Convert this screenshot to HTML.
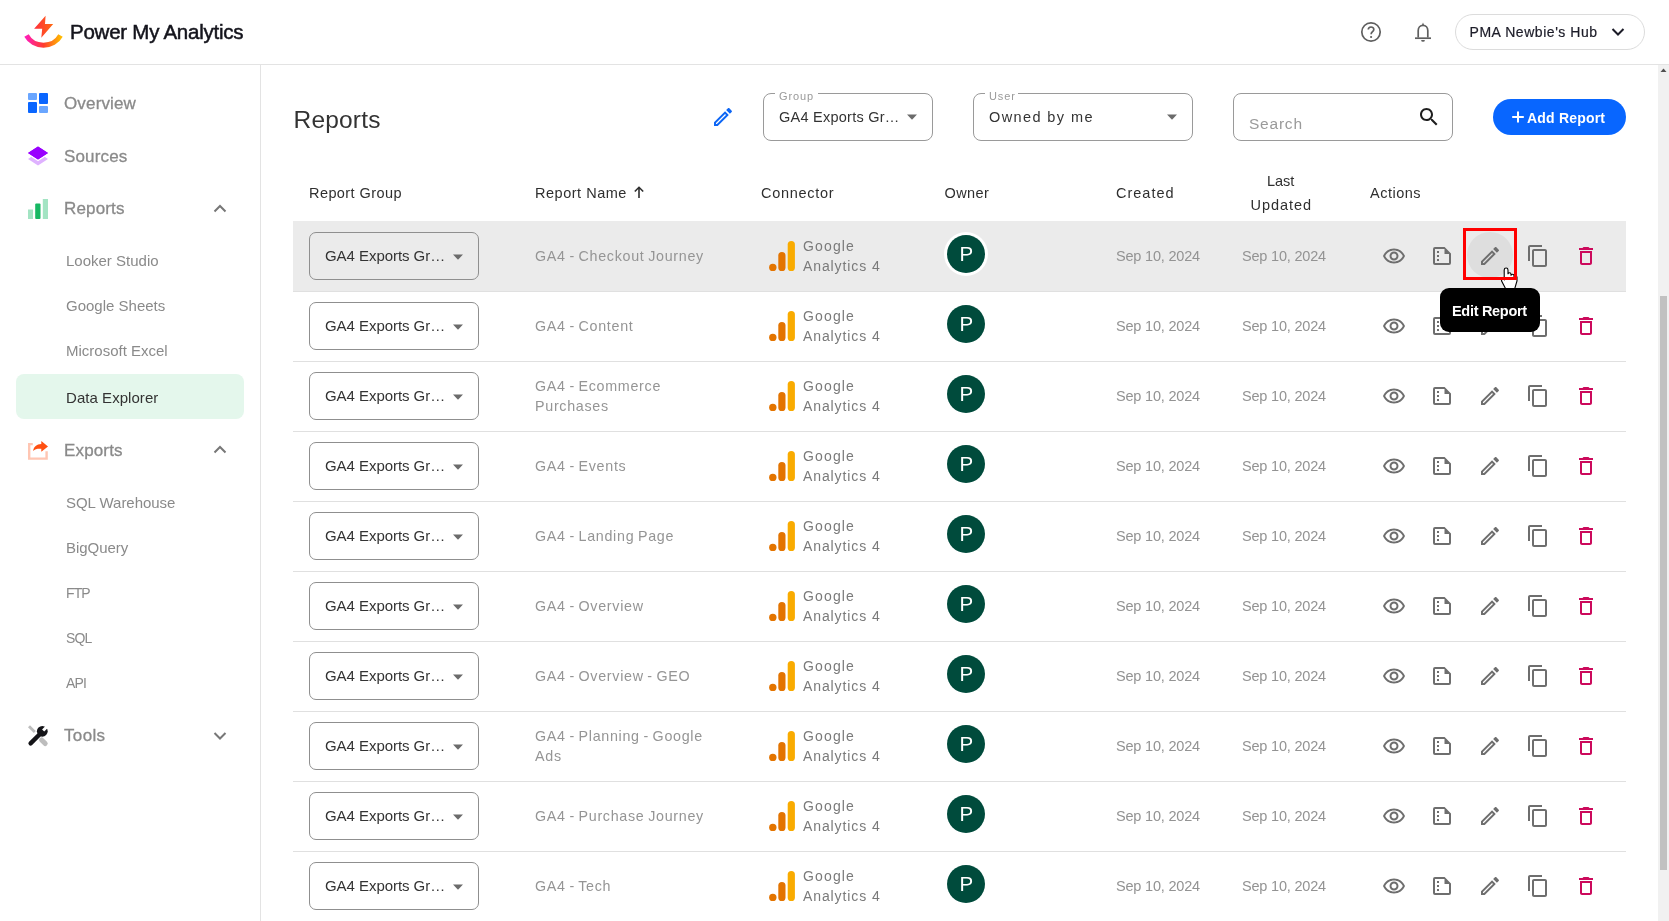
<!DOCTYPE html>
<html><head><meta charset="utf-8"><style>
html,body{margin:0;padding:0;}
body{width:1669px;height:921px;overflow:hidden;position:relative;background:#fff;font-family:"Liberation Sans", sans-serif;}
.t{position:absolute;white-space:nowrap;line-height:20px;}
svg{display:block;}
</style></head><body>
<div id="root" style="position:absolute;left:0;top:0;width:1669px;height:921px;overflow:hidden;background:#fff;will-change:transform">
<div style="position:absolute;left:0px;top:64px;width:1669px;height:1px;background:#e3e3e3"></div>
<svg style="position:absolute;left:20px;top:12px;" width="46" height="40" viewBox="0 0 46 40">
<defs>
<linearGradient id="lgA" x1="0" y1="0" x2="1" y2="0"><stop offset="0" stop-color="#ff1fb4"/><stop offset="0.5" stop-color="#ff3d2e"/><stop offset="1" stop-color="#ffb800"/></linearGradient>
<linearGradient id="lgB" x1="0" y1="0" x2="1" y2="0"><stop offset="0" stop-color="#ff2d3d"/><stop offset="1" stop-color="#ff6a10"/></linearGradient>
</defs>
<path d="M6.5 23.5 A19 17.5 0 0 0 40.5 23.5" fill="none" stroke="url(#lgA)" stroke-width="5"/>
<path d="M25.6 3.8 L14.1 16.7 L22.2 16.7 L21.3 25.7 L33.2 12 L25 12 Z" fill="url(#lgB)"/>
</svg>
<div class="t" style="left:70.00px;top:22.19px;font-size:20.5px;color:#14141c;font-weight:400;letter-spacing:-0.25px;-webkit-text-stroke:0.5px #14141c;">Power My Analytics</div>
<svg style="position:absolute;left:1359px;top:20px;" width="24" height="24" viewBox="0 0 24 24"><circle cx="12" cy="12" r="9.2" fill="none" stroke="#5f5f5f" stroke-width="1.7"/><path d="M9.3 9.6 C9.3 6.2 14.8 6.2 14.8 9.4 C14.8 11.6 12.1 11.7 12.1 14.3" fill="none" stroke="#5f5f5f" stroke-width="1.7"/><circle cx="12.1" cy="17" r="1.1" fill="#5f5f5f"/></svg>
<svg style="position:absolute;left:1411px;top:20px;" width="24" height="24" viewBox="0 0 24 24"><path d="M7.2 17.5 V10.5 C7.2 7.5 9.2 5.3 12 5.3 C14.8 5.3 16.8 7.5 16.8 10.5 V17.5" fill="none" stroke="#5f5f5f" stroke-width="1.7"/><path d="M4 18.2 H20" stroke="#5f5f5f" stroke-width="1.7"/><path d="M12 2.5 L13 5 L11 5z" fill="#5f5f5f"/><path d="M10.1 19.9 H13.9 A1.9 1.9 0 0 1 10.1 19.9z" fill="#5f5f5f"/></svg>
<div style="position:absolute;left:1455px;top:14px;width:190px;height:36px;border:1px solid #dcdcdc;border-radius:18px;box-sizing:border-box"></div>
<div class="t" style="left:1469.50px;top:21.95px;font-size:14px;color:#1c1c28;font-weight:400;letter-spacing:0.55px;-webkit-text-stroke:0.2px #1c1c28;">PMA Newbie's Hub</div>
<svg style="position:absolute;left:1610px;top:26px;" width="16" height="12" viewBox="0 0 16 12"><path d="M2.5 3 L8 8.5 L13.5 3" fill="none" stroke="#1c1c28" stroke-width="2"/></svg>
<div style="position:absolute;left:260px;top:65px;width:1px;height:856px;background:#e3e3e3"></div>
<svg style="position:absolute;left:28px;top:93px;" width="20" height="20" viewBox="0 0 20 20"><rect x="0" y="0" width="9" height="7" rx="1" fill="#6aa6ff"/><rect x="11" y="0" width="9" height="11" rx="1" fill="#0a66ff"/><rect x="0" y="9" width="9" height="11" rx="1" fill="#0a66ff"/><rect x="11" y="13" width="9" height="7" rx="1" fill="#6aa6ff"/></svg>
<div class="t" style="left:64.00px;top:93.61px;font-size:17px;color:#8a8a8a;font-weight:400;letter-spacing:0.15px;-webkit-text-stroke:0.3px #8a8a8a;">Overview</div>
<svg style="position:absolute;left:28px;top:145px;" width="20" height="22" viewBox="0 0 20 22"><path d="M10 7.4 L20 13.9 L10 20.4 L0 13.9z" fill="#dfb2ff"/><path d="M10 1.6 L20 8.1 L10 14.6 L0 8.1z" fill="#9900ff" stroke="#fff" stroke-width="2.6" paint-order="stroke"/><path d="M10 1.6 L20 8.1 L10 14.6 L0 8.1z" fill="#9900ff"/></svg>
<div class="t" style="left:64.00px;top:146.61px;font-size:17px;color:#8a8a8a;font-weight:400;letter-spacing:0.15px;-webkit-text-stroke:0.3px #8a8a8a;">Sources</div>
<svg style="position:absolute;left:28px;top:199px;" width="20" height="20" viewBox="0 0 20 20"><rect x="0" y="10.5" width="5" height="9.5" fill="#a3e4c3"/><rect x="7.2" y="4.5" width="5.3" height="15.5" rx="1" fill="#17b863"/><rect x="14.8" y="0" width="5.2" height="20" fill="#a3e4c3"/></svg>
<div class="t" style="left:64.00px;top:199.41px;font-size:17px;color:#8a8a8a;font-weight:400;letter-spacing:0.15px;-webkit-text-stroke:0.3px #8a8a8a;">Reports</div>
<svg style="position:absolute;left:212px;top:202px;" width="16" height="12" viewBox="0 0 16 12"><path d="M2.5 9.5 L8 4 L13.5 9.5" fill="none" stroke="#777" stroke-width="2"/></svg>
<div class="t" style="left:66.00px;top:251.10px;font-size:15px;color:#8a8a8a;font-weight:400;letter-spacing:0px;">Looker Studio</div>
<div class="t" style="left:66.00px;top:296.10px;font-size:15px;color:#8a8a8a;font-weight:400;letter-spacing:0px;">Google Sheets</div>
<div class="t" style="left:66.00px;top:341.10px;font-size:15px;color:#8a8a8a;font-weight:400;letter-spacing:0px;">Microsoft Excel</div>
<div style="position:absolute;left:16px;top:374px;width:228px;height:45px;background:#e4f7ec;border-radius:8px"></div>
<div class="t" style="left:66.00px;top:387.90px;font-size:15px;color:#333;font-weight:400;letter-spacing:0.05px;">Data Explorer</div>
<svg style="position:absolute;left:24px;top:436px;" width="28" height="28" viewBox="0 0 28 28"><path d="M8.8 8.1 H5.2 V22.6 H22.6 V15.2" fill="none" stroke="#ffc6b3" stroke-width="2.4"/><path d="M24 10.5 L17.3 5 V8.1 C12.5 8.3 9.8 11 9.1 14.9 C11 13 13.5 12.6 17.3 12.8 V15.8 Z" fill="#ff5012"/></svg>
<div class="t" style="left:64.00px;top:440.61px;font-size:17px;color:#8a8a8a;font-weight:400;letter-spacing:0.15px;-webkit-text-stroke:0.3px #8a8a8a;">Exports</div>
<svg style="position:absolute;left:212px;top:443px;" width="16" height="12" viewBox="0 0 16 12"><path d="M2.5 9.5 L8 4 L13.5 9.5" fill="none" stroke="#777" stroke-width="2"/></svg>
<div class="t" style="left:66.00px;top:492.60px;font-size:15px;color:#8a8a8a;font-weight:400;letter-spacing:-0.03px;">SQL Warehouse</div>
<div class="t" style="left:66.00px;top:537.60px;font-size:15px;color:#8a8a8a;font-weight:400;letter-spacing:-0.03px;">BigQuery</div>
<div class="t" style="left:66.00px;top:582.55px;font-size:14px;color:#8a8a8a;font-weight:400;letter-spacing:-0.9px;">FTP</div>
<div class="t" style="left:66.00px;top:627.55px;font-size:14px;color:#8a8a8a;font-weight:400;letter-spacing:-0.9px;">SQL</div>
<div class="t" style="left:66.00px;top:672.55px;font-size:14px;color:#8a8a8a;font-weight:400;letter-spacing:-0.9px;">API</div>
<svg style="position:absolute;left:24px;top:721px;" width="28" height="28" viewBox="0 0 28 28"><defs><mask id="wm" maskUnits="userSpaceOnUse" x="0" y="0" width="28" height="28"><rect x="0" y="0" width="28" height="28" fill="#fff"/><path d="M20.21 10.51 L18.09 8.39 L22.19 4.29 L24.31 6.41z" fill="#000"/></mask></defs><path d="M5.0 5.2 L10.8 11" stroke="#bdbdbd" stroke-width="2.8"/><path d="M17.6 19 L21.2 22.6" stroke="#bdbdbd" stroke-width="5" stroke-linecap="round"/><g mask="url(#wm)" fill="#141418"><circle cx="18.3" cy="10.3" r="5.4"/><path d="M6.6 22.4 L15.5 13.5" stroke="#141418" stroke-width="4.4" stroke-linecap="round"/></g></svg>
<div class="t" style="left:64.00px;top:726.41px;font-size:17px;color:#8a8a8a;font-weight:400;letter-spacing:0.35px;-webkit-text-stroke:0.3px #8a8a8a;">Tools</div>
<svg style="position:absolute;left:212px;top:730px;" width="16" height="12" viewBox="0 0 16 12"><path d="M2.5 3 L8 8.5 L13.5 3" fill="none" stroke="#777" stroke-width="2"/></svg>
<div class="t" style="left:293.50px;top:110.21px;font-size:24.5px;color:#333;font-weight:400;letter-spacing:0.2px;">Reports</div>
<svg style="position:absolute;left:711px;top:105px;" width="24" height="24" viewBox="0 0 24 24"><path d="M3 17.25V21h3.75L17.81 9.94l-3.75-3.75L3 17.25zM5.92 19H5v-.92l9.06-9.06.92.92L5.92 19zM20.71 5.63l-2.34-2.34c-.39-.39-1.02-.39-1.41 0l-1.83 1.83 3.75 3.75 1.83-1.83c.39-.39.39-1.02 0-1.41z" fill="#0d66f5"/></svg>
<div style="position:absolute;left:763px;top:93px;width:170px;height:48px;border:1px solid #9a9a9a;border-radius:8px;box-sizing:border-box"></div>
<div style="position:absolute;left:775px;top:91px;width:43px;height:5px;background:#fff"></div>
<div class="t" style="left:779.00px;top:86.19px;font-size:11px;color:#9a9a9a;font-weight:400;letter-spacing:0.9px;">Group</div>
<div class="t" style="left:779.00px;top:106.67px;font-size:14.5px;color:#333;font-weight:400;letter-spacing:0.25px;">GA4 Exports Gr…</div>
<svg style="position:absolute;left:904px;top:112px;" width="16" height="10" viewBox="0 0 16 10"><path d="M3 2.5 H13 L8 7.8z" fill="#6b6b6b"/></svg>
<div style="position:absolute;left:973px;top:93px;width:220px;height:48px;border:1px solid #9a9a9a;border-radius:8px;box-sizing:border-box"></div>
<div style="position:absolute;left:985px;top:91px;width:33px;height:5px;background:#fff"></div>
<div class="t" style="left:989.00px;top:86.19px;font-size:11px;color:#9a9a9a;font-weight:400;letter-spacing:0.9px;">User</div>
<div class="t" style="left:989.00px;top:107.37px;font-size:14.5px;color:#333;font-weight:400;letter-spacing:1.4px;">Owned by me</div>
<svg style="position:absolute;left:1164px;top:112px;" width="16" height="10" viewBox="0 0 16 10"><path d="M3 2.5 H13 L8 7.8z" fill="#6b6b6b"/></svg>
<div style="position:absolute;left:1233px;top:93px;width:220px;height:48px;border:1px solid #9a9a9a;border-radius:8px;box-sizing:border-box"></div>
<div class="t" style="left:1249.00px;top:113.53px;font-size:15.5px;color:#9a9a9a;font-weight:400;letter-spacing:0.78px;">Search</div>
<svg style="position:absolute;left:1417px;top:105px;" width="24" height="24" viewBox="0 0 24 24"><path d="M15.5 14h-.79l-.28-.27C15.41 12.59 16 11.11 16 9.5 16 5.91 13.09 3 9.5 3S3 5.91 3 9.5 5.91 16 9.5 16c1.61 0 3.09-.59 4.23-1.57l.27.28v.79l5 4.99L20.49 19l-4.99-5zm-6 0C7.01 14 5 11.99 5 9.5S7.01 5 9.5 5 14 7.01 14 9.5 11.99 14 9.5 14z" fill="#1f1f1f"/></svg>
<div style="position:absolute;left:1493px;top:99px;width:133px;height:36px;background:#0866ff;border-radius:18px"></div>
<svg style="position:absolute;left:1511px;top:111px;" width="14" height="12" viewBox="0 0 14 12"><path d="M7 0.5 V11.5 M1.2 6 H12.8" stroke="#fff" stroke-width="2"/></svg>
<div class="t" style="left:1527.00px;top:107.75px;font-size:14px;color:#fff;font-weight:700;letter-spacing:0.2px;">Add Report</div>
<div class="t" style="left:309.00px;top:183.27px;font-size:14.5px;color:#2f2f2f;font-weight:400;letter-spacing:0.42px;">Report Group</div>
<div class="t" style="left:535.00px;top:183.27px;font-size:14.5px;color:#2f2f2f;font-weight:400;letter-spacing:0.52px;">Report Name</div>
<svg style="position:absolute;left:632px;top:184px;" width="14" height="16" viewBox="0 0 14 16"><path d="M7 14 V3.5 M2.8 7.5 L7 3.3 L11.2 7.5" fill="none" stroke="#2f2f2f" stroke-width="1.6"/></svg>
<div class="t" style="left:761.00px;top:183.37px;font-size:14.5px;color:#2f2f2f;font-weight:400;letter-spacing:0.72px;">Connector</div>
<div class="t" style="left:944.50px;top:183.37px;font-size:14.5px;color:#2f2f2f;font-weight:400;letter-spacing:0.42px;">Owner</div>
<div class="t" style="left:1116.00px;top:183.37px;font-size:14.5px;color:#2f2f2f;font-weight:400;letter-spacing:1.0px;">Created</div>
<div class="t" style="left:1267.00px;top:171.27px;font-size:14.5px;color:#2f2f2f;font-weight:400;letter-spacing:-0.05px;">Last</div>
<div class="t" style="left:1250.50px;top:195.07px;font-size:14.5px;color:#2f2f2f;font-weight:400;letter-spacing:0.95px;">Updated</div>
<div class="t" style="left:1370.00px;top:183.37px;font-size:14.5px;color:#2f2f2f;font-weight:400;letter-spacing:0.5px;">Actions</div>
<div style="position:absolute;left:293px;top:221px;width:1333px;height:70px;background:#ebebeb"></div>
<div style="position:absolute;left:293px;top:291px;width:1333px;height:1px;background:#e0e0e0"></div>
<div style="position:absolute;left:309px;top:232px;width:170px;height:48px;border:1px solid #8f8f8f;border-radius:7px;box-sizing:border-box"></div>
<div class="t" style="left:325.00px;top:245.80px;font-size:15px;color:#333;font-weight:400;letter-spacing:-0.05px;">GA4 Exports Gr…</div>
<svg style="position:absolute;left:450px;top:252px;" width="16" height="10" viewBox="0 0 16 10"><path d="M3 2.5 H13 L8 7.8z" fill="#6b6b6b"/></svg>
<div class="t" style="left:535.00px;top:246.14px;font-size:14.3px;color:#959595;font-weight:400;letter-spacing:0.7px;word-spacing:-1px;">GA4 - Checkout Journey</div>
<svg style="position:absolute;left:769px;top:241px;" width="27" height="31" viewBox="0 0 27 31"><circle cx="3.8" cy="26.4" r="3.7" fill="#e37400"/><rect x="9.3" y="11" width="7.2" height="19" rx="3.6" fill="#e37400"/><rect x="18.7" y="0" width="7.2" height="30" rx="3.6" fill="#f9ab00"/></svg>
<div class="t" style="left:803.00px;top:236.35px;font-size:14px;color:#7a7a7a;font-weight:400;letter-spacing:1.15px;">Google</div>
<div class="t" style="left:803.00px;top:256.35px;font-size:14px;color:#7a7a7a;font-weight:400;letter-spacing:0.9px;">Analytics 4</div>
<div style="position:absolute;left:944px;top:232px;width:44px;height:44px;border-radius:50%;background:#fff"></div>
<div style="position:absolute;left:947px;top:235px;width:38px;height:38px;border-radius:50%;background:#004b3c"></div>
<div class="t" style="left:959.50px;top:244.39px;font-size:20.5px;color:#fff;font-weight:400;letter-spacing:0px;">P</div>
<div class="t" style="left:1116.00px;top:246.17px;font-size:14.5px;color:#939393;font-weight:400;letter-spacing:-0.2px;">Sep 10, 2024</div>
<div class="t" style="left:1242.00px;top:246.17px;font-size:14.5px;color:#939393;font-weight:400;letter-spacing:-0.2px;">Sep 10, 2024</div>
<svg style="position:absolute;left:1382px;top:243.5px;" width="24" height="24" viewBox="0 0 24 24"><path d="M12 6.5c3.79 0 7.17 2.13 8.82 5.5-1.65 3.37-5.02 5.5-8.82 5.5S4.83 15.37 3.18 12C4.83 8.63 8.21 6.5 12 6.5m0-2C7 4.5 2.73 7.61 1 12c1.73 4.39 6 7.5 11 7.5s9.27-3.11 11-7.5c-1.73-4.39-6-7.5-11-7.5zm0 5c1.38 0 2.5 1.12 2.5 2.5s-1.12 2.5-2.5 2.5-2.5-1.12-2.5-2.5 1.12-2.5 2.5-2.5m0-2c-2.48 0-4.5 2.02-4.5 4.5s2.02 4.5 4.5 4.5 4.5-2.02 4.5-4.5-2.02-4.5-4.5-4.5z" fill="#6e6e6e"/></svg>
<svg style="position:absolute;left:1430px;top:244px;" width="24" height="24" viewBox="0 0 24 24"><path fill-rule="evenodd" d="M5 3H14.6L21 9.4V19a2 2 0 0 1-2 2H5a2 2 0 0 1-2-2V5a2 2 0 0 1 2-2zM5 5V19H19V10H14.5V5z" fill="#6e6e6e"/><path d="M7 7h2v2H7zM7 11h2v2H7zM7 15h2v2H7z" fill="#6e6e6e"/></svg>
<div style="position:absolute;left:1467px;top:232px;width:46px;height:46px;border-radius:50%;background:#dedede"></div>
<svg style="position:absolute;left:1478px;top:244px;" width="24" height="24" viewBox="0 0 24 24"><path d="M3 17.25V21h3.75L17.81 9.94l-3.75-3.75L3 17.25zM5.92 19H5v-.92l9.06-9.06.92.92L5.92 19zM20.71 5.63l-2.34-2.34c-.39-.39-1.02-.39-1.41 0l-1.83 1.83 3.75 3.75 1.83-1.83c.39-.39.39-1.02 0-1.41z" fill="#6e6e6e"/></svg>
<svg style="position:absolute;left:1526px;top:244px;" width="24" height="24" viewBox="0 0 24 24"><path d="M16 1H4c-1.1 0-2 .9-2 2v14h2V3h12V1zm3 4H8c-1.1 0-2 .9-2 2v14c0 1.1.9 2 2 2h11c1.1 0 2-.9 2-2V7c0-1.1-.9-2-2-2zm0 16H8V7h11v14z" fill="#6e6e6e"/></svg>
<svg style="position:absolute;left:1574px;top:244px;" width="24" height="24" viewBox="0 0 24 24"><path d="M16 9v10H8V9h8m-1.5-6h-5l-1 1H5v2h14V4h-3.5l-1-1zM18 7H6v12c0 1.1.9 2 2 2h8c1.1 0 2-.9 2-2V7z" fill="#cc0a5c"/></svg>
<div style="position:absolute;left:293px;top:361px;width:1333px;height:1px;background:#e0e0e0"></div>
<div style="position:absolute;left:309px;top:302px;width:170px;height:48px;border:1px solid #8f8f8f;border-radius:7px;box-sizing:border-box"></div>
<div class="t" style="left:325.00px;top:315.80px;font-size:15px;color:#333;font-weight:400;letter-spacing:-0.05px;">GA4 Exports Gr…</div>
<svg style="position:absolute;left:450px;top:322px;" width="16" height="10" viewBox="0 0 16 10"><path d="M3 2.5 H13 L8 7.8z" fill="#6b6b6b"/></svg>
<div class="t" style="left:535.00px;top:316.14px;font-size:14.3px;color:#959595;font-weight:400;letter-spacing:0.7px;word-spacing:-1px;">GA4 - Content</div>
<svg style="position:absolute;left:769px;top:311px;" width="27" height="31" viewBox="0 0 27 31"><circle cx="3.8" cy="26.4" r="3.7" fill="#e37400"/><rect x="9.3" y="11" width="7.2" height="19" rx="3.6" fill="#e37400"/><rect x="18.7" y="0" width="7.2" height="30" rx="3.6" fill="#f9ab00"/></svg>
<div class="t" style="left:803.00px;top:306.35px;font-size:14px;color:#7a7a7a;font-weight:400;letter-spacing:1.15px;">Google</div>
<div class="t" style="left:803.00px;top:326.35px;font-size:14px;color:#7a7a7a;font-weight:400;letter-spacing:0.9px;">Analytics 4</div>
<div style="position:absolute;left:944px;top:302px;width:44px;height:44px;border-radius:50%;background:#fff"></div>
<div style="position:absolute;left:947px;top:305px;width:38px;height:38px;border-radius:50%;background:#004b3c"></div>
<div class="t" style="left:959.50px;top:314.39px;font-size:20.5px;color:#fff;font-weight:400;letter-spacing:0px;">P</div>
<div class="t" style="left:1116.00px;top:316.17px;font-size:14.5px;color:#939393;font-weight:400;letter-spacing:-0.2px;">Sep 10, 2024</div>
<div class="t" style="left:1242.00px;top:316.17px;font-size:14.5px;color:#939393;font-weight:400;letter-spacing:-0.2px;">Sep 10, 2024</div>
<svg style="position:absolute;left:1382px;top:313.5px;" width="24" height="24" viewBox="0 0 24 24"><path d="M12 6.5c3.79 0 7.17 2.13 8.82 5.5-1.65 3.37-5.02 5.5-8.82 5.5S4.83 15.37 3.18 12C4.83 8.63 8.21 6.5 12 6.5m0-2C7 4.5 2.73 7.61 1 12c1.73 4.39 6 7.5 11 7.5s9.27-3.11 11-7.5c-1.73-4.39-6-7.5-11-7.5zm0 5c1.38 0 2.5 1.12 2.5 2.5s-1.12 2.5-2.5 2.5-2.5-1.12-2.5-2.5 1.12-2.5 2.5-2.5m0-2c-2.48 0-4.5 2.02-4.5 4.5s2.02 4.5 4.5 4.5 4.5-2.02 4.5-4.5-2.02-4.5-4.5-4.5z" fill="#6e6e6e"/></svg>
<svg style="position:absolute;left:1430px;top:314px;" width="24" height="24" viewBox="0 0 24 24"><path fill-rule="evenodd" d="M5 3H14.6L21 9.4V19a2 2 0 0 1-2 2H5a2 2 0 0 1-2-2V5a2 2 0 0 1 2-2zM5 5V19H19V10H14.5V5z" fill="#6e6e6e"/><path d="M7 7h2v2H7zM7 11h2v2H7zM7 15h2v2H7z" fill="#6e6e6e"/></svg>
<svg style="position:absolute;left:1478px;top:314px;" width="24" height="24" viewBox="0 0 24 24"><path d="M3 17.25V21h3.75L17.81 9.94l-3.75-3.75L3 17.25zM5.92 19H5v-.92l9.06-9.06.92.92L5.92 19zM20.71 5.63l-2.34-2.34c-.39-.39-1.02-.39-1.41 0l-1.83 1.83 3.75 3.75 1.83-1.83c.39-.39.39-1.02 0-1.41z" fill="#6e6e6e"/></svg>
<svg style="position:absolute;left:1526px;top:314px;" width="24" height="24" viewBox="0 0 24 24"><path d="M16 1H4c-1.1 0-2 .9-2 2v14h2V3h12V1zm3 4H8c-1.1 0-2 .9-2 2v14c0 1.1.9 2 2 2h11c1.1 0 2-.9 2-2V7c0-1.1-.9-2-2-2zm0 16H8V7h11v14z" fill="#6e6e6e"/></svg>
<svg style="position:absolute;left:1574px;top:314px;" width="24" height="24" viewBox="0 0 24 24"><path d="M16 9v10H8V9h8m-1.5-6h-5l-1 1H5v2h14V4h-3.5l-1-1zM18 7H6v12c0 1.1.9 2 2 2h8c1.1 0 2-.9 2-2V7z" fill="#cc0a5c"/></svg>
<div style="position:absolute;left:293px;top:431px;width:1333px;height:1px;background:#e0e0e0"></div>
<div style="position:absolute;left:309px;top:372px;width:170px;height:48px;border:1px solid #8f8f8f;border-radius:7px;box-sizing:border-box"></div>
<div class="t" style="left:325.00px;top:385.80px;font-size:15px;color:#333;font-weight:400;letter-spacing:-0.05px;">GA4 Exports Gr…</div>
<svg style="position:absolute;left:450px;top:392px;" width="16" height="10" viewBox="0 0 16 10"><path d="M3 2.5 H13 L8 7.8z" fill="#6b6b6b"/></svg>
<div class="t" style="left:535.00px;top:376.14px;font-size:14.3px;color:#959595;font-weight:400;letter-spacing:0.7px;word-spacing:-1px;">GA4 - Ecommerce</div>
<div class="t" style="left:535.00px;top:396.14px;font-size:14.3px;color:#959595;font-weight:400;letter-spacing:0.7px;word-spacing:-1px;">Purchases</div>
<svg style="position:absolute;left:769px;top:381px;" width="27" height="31" viewBox="0 0 27 31"><circle cx="3.8" cy="26.4" r="3.7" fill="#e37400"/><rect x="9.3" y="11" width="7.2" height="19" rx="3.6" fill="#e37400"/><rect x="18.7" y="0" width="7.2" height="30" rx="3.6" fill="#f9ab00"/></svg>
<div class="t" style="left:803.00px;top:376.35px;font-size:14px;color:#7a7a7a;font-weight:400;letter-spacing:1.15px;">Google</div>
<div class="t" style="left:803.00px;top:396.35px;font-size:14px;color:#7a7a7a;font-weight:400;letter-spacing:0.9px;">Analytics 4</div>
<div style="position:absolute;left:944px;top:372px;width:44px;height:44px;border-radius:50%;background:#fff"></div>
<div style="position:absolute;left:947px;top:375px;width:38px;height:38px;border-radius:50%;background:#004b3c"></div>
<div class="t" style="left:959.50px;top:384.39px;font-size:20.5px;color:#fff;font-weight:400;letter-spacing:0px;">P</div>
<div class="t" style="left:1116.00px;top:386.17px;font-size:14.5px;color:#939393;font-weight:400;letter-spacing:-0.2px;">Sep 10, 2024</div>
<div class="t" style="left:1242.00px;top:386.17px;font-size:14.5px;color:#939393;font-weight:400;letter-spacing:-0.2px;">Sep 10, 2024</div>
<svg style="position:absolute;left:1382px;top:383.5px;" width="24" height="24" viewBox="0 0 24 24"><path d="M12 6.5c3.79 0 7.17 2.13 8.82 5.5-1.65 3.37-5.02 5.5-8.82 5.5S4.83 15.37 3.18 12C4.83 8.63 8.21 6.5 12 6.5m0-2C7 4.5 2.73 7.61 1 12c1.73 4.39 6 7.5 11 7.5s9.27-3.11 11-7.5c-1.73-4.39-6-7.5-11-7.5zm0 5c1.38 0 2.5 1.12 2.5 2.5s-1.12 2.5-2.5 2.5-2.5-1.12-2.5-2.5 1.12-2.5 2.5-2.5m0-2c-2.48 0-4.5 2.02-4.5 4.5s2.02 4.5 4.5 4.5 4.5-2.02 4.5-4.5-2.02-4.5-4.5-4.5z" fill="#6e6e6e"/></svg>
<svg style="position:absolute;left:1430px;top:384px;" width="24" height="24" viewBox="0 0 24 24"><path fill-rule="evenodd" d="M5 3H14.6L21 9.4V19a2 2 0 0 1-2 2H5a2 2 0 0 1-2-2V5a2 2 0 0 1 2-2zM5 5V19H19V10H14.5V5z" fill="#6e6e6e"/><path d="M7 7h2v2H7zM7 11h2v2H7zM7 15h2v2H7z" fill="#6e6e6e"/></svg>
<svg style="position:absolute;left:1478px;top:384px;" width="24" height="24" viewBox="0 0 24 24"><path d="M3 17.25V21h3.75L17.81 9.94l-3.75-3.75L3 17.25zM5.92 19H5v-.92l9.06-9.06.92.92L5.92 19zM20.71 5.63l-2.34-2.34c-.39-.39-1.02-.39-1.41 0l-1.83 1.83 3.75 3.75 1.83-1.83c.39-.39.39-1.02 0-1.41z" fill="#6e6e6e"/></svg>
<svg style="position:absolute;left:1526px;top:384px;" width="24" height="24" viewBox="0 0 24 24"><path d="M16 1H4c-1.1 0-2 .9-2 2v14h2V3h12V1zm3 4H8c-1.1 0-2 .9-2 2v14c0 1.1.9 2 2 2h11c1.1 0 2-.9 2-2V7c0-1.1-.9-2-2-2zm0 16H8V7h11v14z" fill="#6e6e6e"/></svg>
<svg style="position:absolute;left:1574px;top:384px;" width="24" height="24" viewBox="0 0 24 24"><path d="M16 9v10H8V9h8m-1.5-6h-5l-1 1H5v2h14V4h-3.5l-1-1zM18 7H6v12c0 1.1.9 2 2 2h8c1.1 0 2-.9 2-2V7z" fill="#cc0a5c"/></svg>
<div style="position:absolute;left:293px;top:501px;width:1333px;height:1px;background:#e0e0e0"></div>
<div style="position:absolute;left:309px;top:442px;width:170px;height:48px;border:1px solid #8f8f8f;border-radius:7px;box-sizing:border-box"></div>
<div class="t" style="left:325.00px;top:455.80px;font-size:15px;color:#333;font-weight:400;letter-spacing:-0.05px;">GA4 Exports Gr…</div>
<svg style="position:absolute;left:450px;top:462px;" width="16" height="10" viewBox="0 0 16 10"><path d="M3 2.5 H13 L8 7.8z" fill="#6b6b6b"/></svg>
<div class="t" style="left:535.00px;top:456.14px;font-size:14.3px;color:#959595;font-weight:400;letter-spacing:0.7px;word-spacing:-1px;">GA4 - Events</div>
<svg style="position:absolute;left:769px;top:451px;" width="27" height="31" viewBox="0 0 27 31"><circle cx="3.8" cy="26.4" r="3.7" fill="#e37400"/><rect x="9.3" y="11" width="7.2" height="19" rx="3.6" fill="#e37400"/><rect x="18.7" y="0" width="7.2" height="30" rx="3.6" fill="#f9ab00"/></svg>
<div class="t" style="left:803.00px;top:446.35px;font-size:14px;color:#7a7a7a;font-weight:400;letter-spacing:1.15px;">Google</div>
<div class="t" style="left:803.00px;top:466.35px;font-size:14px;color:#7a7a7a;font-weight:400;letter-spacing:0.9px;">Analytics 4</div>
<div style="position:absolute;left:944px;top:442px;width:44px;height:44px;border-radius:50%;background:#fff"></div>
<div style="position:absolute;left:947px;top:445px;width:38px;height:38px;border-radius:50%;background:#004b3c"></div>
<div class="t" style="left:959.50px;top:454.39px;font-size:20.5px;color:#fff;font-weight:400;letter-spacing:0px;">P</div>
<div class="t" style="left:1116.00px;top:456.17px;font-size:14.5px;color:#939393;font-weight:400;letter-spacing:-0.2px;">Sep 10, 2024</div>
<div class="t" style="left:1242.00px;top:456.17px;font-size:14.5px;color:#939393;font-weight:400;letter-spacing:-0.2px;">Sep 10, 2024</div>
<svg style="position:absolute;left:1382px;top:453.5px;" width="24" height="24" viewBox="0 0 24 24"><path d="M12 6.5c3.79 0 7.17 2.13 8.82 5.5-1.65 3.37-5.02 5.5-8.82 5.5S4.83 15.37 3.18 12C4.83 8.63 8.21 6.5 12 6.5m0-2C7 4.5 2.73 7.61 1 12c1.73 4.39 6 7.5 11 7.5s9.27-3.11 11-7.5c-1.73-4.39-6-7.5-11-7.5zm0 5c1.38 0 2.5 1.12 2.5 2.5s-1.12 2.5-2.5 2.5-2.5-1.12-2.5-2.5 1.12-2.5 2.5-2.5m0-2c-2.48 0-4.5 2.02-4.5 4.5s2.02 4.5 4.5 4.5 4.5-2.02 4.5-4.5-2.02-4.5-4.5-4.5z" fill="#6e6e6e"/></svg>
<svg style="position:absolute;left:1430px;top:454px;" width="24" height="24" viewBox="0 0 24 24"><path fill-rule="evenodd" d="M5 3H14.6L21 9.4V19a2 2 0 0 1-2 2H5a2 2 0 0 1-2-2V5a2 2 0 0 1 2-2zM5 5V19H19V10H14.5V5z" fill="#6e6e6e"/><path d="M7 7h2v2H7zM7 11h2v2H7zM7 15h2v2H7z" fill="#6e6e6e"/></svg>
<svg style="position:absolute;left:1478px;top:454px;" width="24" height="24" viewBox="0 0 24 24"><path d="M3 17.25V21h3.75L17.81 9.94l-3.75-3.75L3 17.25zM5.92 19H5v-.92l9.06-9.06.92.92L5.92 19zM20.71 5.63l-2.34-2.34c-.39-.39-1.02-.39-1.41 0l-1.83 1.83 3.75 3.75 1.83-1.83c.39-.39.39-1.02 0-1.41z" fill="#6e6e6e"/></svg>
<svg style="position:absolute;left:1526px;top:454px;" width="24" height="24" viewBox="0 0 24 24"><path d="M16 1H4c-1.1 0-2 .9-2 2v14h2V3h12V1zm3 4H8c-1.1 0-2 .9-2 2v14c0 1.1.9 2 2 2h11c1.1 0 2-.9 2-2V7c0-1.1-.9-2-2-2zm0 16H8V7h11v14z" fill="#6e6e6e"/></svg>
<svg style="position:absolute;left:1574px;top:454px;" width="24" height="24" viewBox="0 0 24 24"><path d="M16 9v10H8V9h8m-1.5-6h-5l-1 1H5v2h14V4h-3.5l-1-1zM18 7H6v12c0 1.1.9 2 2 2h8c1.1 0 2-.9 2-2V7z" fill="#cc0a5c"/></svg>
<div style="position:absolute;left:293px;top:571px;width:1333px;height:1px;background:#e0e0e0"></div>
<div style="position:absolute;left:309px;top:512px;width:170px;height:48px;border:1px solid #8f8f8f;border-radius:7px;box-sizing:border-box"></div>
<div class="t" style="left:325.00px;top:525.80px;font-size:15px;color:#333;font-weight:400;letter-spacing:-0.05px;">GA4 Exports Gr…</div>
<svg style="position:absolute;left:450px;top:532px;" width="16" height="10" viewBox="0 0 16 10"><path d="M3 2.5 H13 L8 7.8z" fill="#6b6b6b"/></svg>
<div class="t" style="left:535.00px;top:526.14px;font-size:14.3px;color:#959595;font-weight:400;letter-spacing:0.7px;word-spacing:-1px;">GA4 - Landing Page</div>
<svg style="position:absolute;left:769px;top:521px;" width="27" height="31" viewBox="0 0 27 31"><circle cx="3.8" cy="26.4" r="3.7" fill="#e37400"/><rect x="9.3" y="11" width="7.2" height="19" rx="3.6" fill="#e37400"/><rect x="18.7" y="0" width="7.2" height="30" rx="3.6" fill="#f9ab00"/></svg>
<div class="t" style="left:803.00px;top:516.35px;font-size:14px;color:#7a7a7a;font-weight:400;letter-spacing:1.15px;">Google</div>
<div class="t" style="left:803.00px;top:536.35px;font-size:14px;color:#7a7a7a;font-weight:400;letter-spacing:0.9px;">Analytics 4</div>
<div style="position:absolute;left:944px;top:512px;width:44px;height:44px;border-radius:50%;background:#fff"></div>
<div style="position:absolute;left:947px;top:515px;width:38px;height:38px;border-radius:50%;background:#004b3c"></div>
<div class="t" style="left:959.50px;top:524.39px;font-size:20.5px;color:#fff;font-weight:400;letter-spacing:0px;">P</div>
<div class="t" style="left:1116.00px;top:526.17px;font-size:14.5px;color:#939393;font-weight:400;letter-spacing:-0.2px;">Sep 10, 2024</div>
<div class="t" style="left:1242.00px;top:526.17px;font-size:14.5px;color:#939393;font-weight:400;letter-spacing:-0.2px;">Sep 10, 2024</div>
<svg style="position:absolute;left:1382px;top:523.5px;" width="24" height="24" viewBox="0 0 24 24"><path d="M12 6.5c3.79 0 7.17 2.13 8.82 5.5-1.65 3.37-5.02 5.5-8.82 5.5S4.83 15.37 3.18 12C4.83 8.63 8.21 6.5 12 6.5m0-2C7 4.5 2.73 7.61 1 12c1.73 4.39 6 7.5 11 7.5s9.27-3.11 11-7.5c-1.73-4.39-6-7.5-11-7.5zm0 5c1.38 0 2.5 1.12 2.5 2.5s-1.12 2.5-2.5 2.5-2.5-1.12-2.5-2.5 1.12-2.5 2.5-2.5m0-2c-2.48 0-4.5 2.02-4.5 4.5s2.02 4.5 4.5 4.5 4.5-2.02 4.5-4.5-2.02-4.5-4.5-4.5z" fill="#6e6e6e"/></svg>
<svg style="position:absolute;left:1430px;top:524px;" width="24" height="24" viewBox="0 0 24 24"><path fill-rule="evenodd" d="M5 3H14.6L21 9.4V19a2 2 0 0 1-2 2H5a2 2 0 0 1-2-2V5a2 2 0 0 1 2-2zM5 5V19H19V10H14.5V5z" fill="#6e6e6e"/><path d="M7 7h2v2H7zM7 11h2v2H7zM7 15h2v2H7z" fill="#6e6e6e"/></svg>
<svg style="position:absolute;left:1478px;top:524px;" width="24" height="24" viewBox="0 0 24 24"><path d="M3 17.25V21h3.75L17.81 9.94l-3.75-3.75L3 17.25zM5.92 19H5v-.92l9.06-9.06.92.92L5.92 19zM20.71 5.63l-2.34-2.34c-.39-.39-1.02-.39-1.41 0l-1.83 1.83 3.75 3.75 1.83-1.83c.39-.39.39-1.02 0-1.41z" fill="#6e6e6e"/></svg>
<svg style="position:absolute;left:1526px;top:524px;" width="24" height="24" viewBox="0 0 24 24"><path d="M16 1H4c-1.1 0-2 .9-2 2v14h2V3h12V1zm3 4H8c-1.1 0-2 .9-2 2v14c0 1.1.9 2 2 2h11c1.1 0 2-.9 2-2V7c0-1.1-.9-2-2-2zm0 16H8V7h11v14z" fill="#6e6e6e"/></svg>
<svg style="position:absolute;left:1574px;top:524px;" width="24" height="24" viewBox="0 0 24 24"><path d="M16 9v10H8V9h8m-1.5-6h-5l-1 1H5v2h14V4h-3.5l-1-1zM18 7H6v12c0 1.1.9 2 2 2h8c1.1 0 2-.9 2-2V7z" fill="#cc0a5c"/></svg>
<div style="position:absolute;left:293px;top:641px;width:1333px;height:1px;background:#e0e0e0"></div>
<div style="position:absolute;left:309px;top:582px;width:170px;height:48px;border:1px solid #8f8f8f;border-radius:7px;box-sizing:border-box"></div>
<div class="t" style="left:325.00px;top:595.80px;font-size:15px;color:#333;font-weight:400;letter-spacing:-0.05px;">GA4 Exports Gr…</div>
<svg style="position:absolute;left:450px;top:602px;" width="16" height="10" viewBox="0 0 16 10"><path d="M3 2.5 H13 L8 7.8z" fill="#6b6b6b"/></svg>
<div class="t" style="left:535.00px;top:596.14px;font-size:14.3px;color:#959595;font-weight:400;letter-spacing:0.7px;word-spacing:-1px;">GA4 - Overview</div>
<svg style="position:absolute;left:769px;top:591px;" width="27" height="31" viewBox="0 0 27 31"><circle cx="3.8" cy="26.4" r="3.7" fill="#e37400"/><rect x="9.3" y="11" width="7.2" height="19" rx="3.6" fill="#e37400"/><rect x="18.7" y="0" width="7.2" height="30" rx="3.6" fill="#f9ab00"/></svg>
<div class="t" style="left:803.00px;top:586.35px;font-size:14px;color:#7a7a7a;font-weight:400;letter-spacing:1.15px;">Google</div>
<div class="t" style="left:803.00px;top:606.35px;font-size:14px;color:#7a7a7a;font-weight:400;letter-spacing:0.9px;">Analytics 4</div>
<div style="position:absolute;left:944px;top:582px;width:44px;height:44px;border-radius:50%;background:#fff"></div>
<div style="position:absolute;left:947px;top:585px;width:38px;height:38px;border-radius:50%;background:#004b3c"></div>
<div class="t" style="left:959.50px;top:594.39px;font-size:20.5px;color:#fff;font-weight:400;letter-spacing:0px;">P</div>
<div class="t" style="left:1116.00px;top:596.17px;font-size:14.5px;color:#939393;font-weight:400;letter-spacing:-0.2px;">Sep 10, 2024</div>
<div class="t" style="left:1242.00px;top:596.17px;font-size:14.5px;color:#939393;font-weight:400;letter-spacing:-0.2px;">Sep 10, 2024</div>
<svg style="position:absolute;left:1382px;top:593.5px;" width="24" height="24" viewBox="0 0 24 24"><path d="M12 6.5c3.79 0 7.17 2.13 8.82 5.5-1.65 3.37-5.02 5.5-8.82 5.5S4.83 15.37 3.18 12C4.83 8.63 8.21 6.5 12 6.5m0-2C7 4.5 2.73 7.61 1 12c1.73 4.39 6 7.5 11 7.5s9.27-3.11 11-7.5c-1.73-4.39-6-7.5-11-7.5zm0 5c1.38 0 2.5 1.12 2.5 2.5s-1.12 2.5-2.5 2.5-2.5-1.12-2.5-2.5 1.12-2.5 2.5-2.5m0-2c-2.48 0-4.5 2.02-4.5 4.5s2.02 4.5 4.5 4.5 4.5-2.02 4.5-4.5-2.02-4.5-4.5-4.5z" fill="#6e6e6e"/></svg>
<svg style="position:absolute;left:1430px;top:594px;" width="24" height="24" viewBox="0 0 24 24"><path fill-rule="evenodd" d="M5 3H14.6L21 9.4V19a2 2 0 0 1-2 2H5a2 2 0 0 1-2-2V5a2 2 0 0 1 2-2zM5 5V19H19V10H14.5V5z" fill="#6e6e6e"/><path d="M7 7h2v2H7zM7 11h2v2H7zM7 15h2v2H7z" fill="#6e6e6e"/></svg>
<svg style="position:absolute;left:1478px;top:594px;" width="24" height="24" viewBox="0 0 24 24"><path d="M3 17.25V21h3.75L17.81 9.94l-3.75-3.75L3 17.25zM5.92 19H5v-.92l9.06-9.06.92.92L5.92 19zM20.71 5.63l-2.34-2.34c-.39-.39-1.02-.39-1.41 0l-1.83 1.83 3.75 3.75 1.83-1.83c.39-.39.39-1.02 0-1.41z" fill="#6e6e6e"/></svg>
<svg style="position:absolute;left:1526px;top:594px;" width="24" height="24" viewBox="0 0 24 24"><path d="M16 1H4c-1.1 0-2 .9-2 2v14h2V3h12V1zm3 4H8c-1.1 0-2 .9-2 2v14c0 1.1.9 2 2 2h11c1.1 0 2-.9 2-2V7c0-1.1-.9-2-2-2zm0 16H8V7h11v14z" fill="#6e6e6e"/></svg>
<svg style="position:absolute;left:1574px;top:594px;" width="24" height="24" viewBox="0 0 24 24"><path d="M16 9v10H8V9h8m-1.5-6h-5l-1 1H5v2h14V4h-3.5l-1-1zM18 7H6v12c0 1.1.9 2 2 2h8c1.1 0 2-.9 2-2V7z" fill="#cc0a5c"/></svg>
<div style="position:absolute;left:293px;top:711px;width:1333px;height:1px;background:#e0e0e0"></div>
<div style="position:absolute;left:309px;top:652px;width:170px;height:48px;border:1px solid #8f8f8f;border-radius:7px;box-sizing:border-box"></div>
<div class="t" style="left:325.00px;top:665.80px;font-size:15px;color:#333;font-weight:400;letter-spacing:-0.05px;">GA4 Exports Gr…</div>
<svg style="position:absolute;left:450px;top:672px;" width="16" height="10" viewBox="0 0 16 10"><path d="M3 2.5 H13 L8 7.8z" fill="#6b6b6b"/></svg>
<div class="t" style="left:535.00px;top:666.14px;font-size:14.3px;color:#959595;font-weight:400;letter-spacing:0.7px;word-spacing:-1px;">GA4 - Overview - GEO</div>
<svg style="position:absolute;left:769px;top:661px;" width="27" height="31" viewBox="0 0 27 31"><circle cx="3.8" cy="26.4" r="3.7" fill="#e37400"/><rect x="9.3" y="11" width="7.2" height="19" rx="3.6" fill="#e37400"/><rect x="18.7" y="0" width="7.2" height="30" rx="3.6" fill="#f9ab00"/></svg>
<div class="t" style="left:803.00px;top:656.35px;font-size:14px;color:#7a7a7a;font-weight:400;letter-spacing:1.15px;">Google</div>
<div class="t" style="left:803.00px;top:676.35px;font-size:14px;color:#7a7a7a;font-weight:400;letter-spacing:0.9px;">Analytics 4</div>
<div style="position:absolute;left:944px;top:652px;width:44px;height:44px;border-radius:50%;background:#fff"></div>
<div style="position:absolute;left:947px;top:655px;width:38px;height:38px;border-radius:50%;background:#004b3c"></div>
<div class="t" style="left:959.50px;top:664.39px;font-size:20.5px;color:#fff;font-weight:400;letter-spacing:0px;">P</div>
<div class="t" style="left:1116.00px;top:666.17px;font-size:14.5px;color:#939393;font-weight:400;letter-spacing:-0.2px;">Sep 10, 2024</div>
<div class="t" style="left:1242.00px;top:666.17px;font-size:14.5px;color:#939393;font-weight:400;letter-spacing:-0.2px;">Sep 10, 2024</div>
<svg style="position:absolute;left:1382px;top:663.5px;" width="24" height="24" viewBox="0 0 24 24"><path d="M12 6.5c3.79 0 7.17 2.13 8.82 5.5-1.65 3.37-5.02 5.5-8.82 5.5S4.83 15.37 3.18 12C4.83 8.63 8.21 6.5 12 6.5m0-2C7 4.5 2.73 7.61 1 12c1.73 4.39 6 7.5 11 7.5s9.27-3.11 11-7.5c-1.73-4.39-6-7.5-11-7.5zm0 5c1.38 0 2.5 1.12 2.5 2.5s-1.12 2.5-2.5 2.5-2.5-1.12-2.5-2.5 1.12-2.5 2.5-2.5m0-2c-2.48 0-4.5 2.02-4.5 4.5s2.02 4.5 4.5 4.5 4.5-2.02 4.5-4.5-2.02-4.5-4.5-4.5z" fill="#6e6e6e"/></svg>
<svg style="position:absolute;left:1430px;top:664px;" width="24" height="24" viewBox="0 0 24 24"><path fill-rule="evenodd" d="M5 3H14.6L21 9.4V19a2 2 0 0 1-2 2H5a2 2 0 0 1-2-2V5a2 2 0 0 1 2-2zM5 5V19H19V10H14.5V5z" fill="#6e6e6e"/><path d="M7 7h2v2H7zM7 11h2v2H7zM7 15h2v2H7z" fill="#6e6e6e"/></svg>
<svg style="position:absolute;left:1478px;top:664px;" width="24" height="24" viewBox="0 0 24 24"><path d="M3 17.25V21h3.75L17.81 9.94l-3.75-3.75L3 17.25zM5.92 19H5v-.92l9.06-9.06.92.92L5.92 19zM20.71 5.63l-2.34-2.34c-.39-.39-1.02-.39-1.41 0l-1.83 1.83 3.75 3.75 1.83-1.83c.39-.39.39-1.02 0-1.41z" fill="#6e6e6e"/></svg>
<svg style="position:absolute;left:1526px;top:664px;" width="24" height="24" viewBox="0 0 24 24"><path d="M16 1H4c-1.1 0-2 .9-2 2v14h2V3h12V1zm3 4H8c-1.1 0-2 .9-2 2v14c0 1.1.9 2 2 2h11c1.1 0 2-.9 2-2V7c0-1.1-.9-2-2-2zm0 16H8V7h11v14z" fill="#6e6e6e"/></svg>
<svg style="position:absolute;left:1574px;top:664px;" width="24" height="24" viewBox="0 0 24 24"><path d="M16 9v10H8V9h8m-1.5-6h-5l-1 1H5v2h14V4h-3.5l-1-1zM18 7H6v12c0 1.1.9 2 2 2h8c1.1 0 2-.9 2-2V7z" fill="#cc0a5c"/></svg>
<div style="position:absolute;left:293px;top:781px;width:1333px;height:1px;background:#e0e0e0"></div>
<div style="position:absolute;left:309px;top:722px;width:170px;height:48px;border:1px solid #8f8f8f;border-radius:7px;box-sizing:border-box"></div>
<div class="t" style="left:325.00px;top:735.80px;font-size:15px;color:#333;font-weight:400;letter-spacing:-0.05px;">GA4 Exports Gr…</div>
<svg style="position:absolute;left:450px;top:742px;" width="16" height="10" viewBox="0 0 16 10"><path d="M3 2.5 H13 L8 7.8z" fill="#6b6b6b"/></svg>
<div class="t" style="left:535.00px;top:726.14px;font-size:14.3px;color:#959595;font-weight:400;letter-spacing:0.7px;word-spacing:-1px;">GA4 - Planning - Google</div>
<div class="t" style="left:535.00px;top:746.14px;font-size:14.3px;color:#959595;font-weight:400;letter-spacing:0.7px;word-spacing:-1px;">Ads</div>
<svg style="position:absolute;left:769px;top:731px;" width="27" height="31" viewBox="0 0 27 31"><circle cx="3.8" cy="26.4" r="3.7" fill="#e37400"/><rect x="9.3" y="11" width="7.2" height="19" rx="3.6" fill="#e37400"/><rect x="18.7" y="0" width="7.2" height="30" rx="3.6" fill="#f9ab00"/></svg>
<div class="t" style="left:803.00px;top:726.35px;font-size:14px;color:#7a7a7a;font-weight:400;letter-spacing:1.15px;">Google</div>
<div class="t" style="left:803.00px;top:746.35px;font-size:14px;color:#7a7a7a;font-weight:400;letter-spacing:0.9px;">Analytics 4</div>
<div style="position:absolute;left:944px;top:722px;width:44px;height:44px;border-radius:50%;background:#fff"></div>
<div style="position:absolute;left:947px;top:725px;width:38px;height:38px;border-radius:50%;background:#004b3c"></div>
<div class="t" style="left:959.50px;top:734.39px;font-size:20.5px;color:#fff;font-weight:400;letter-spacing:0px;">P</div>
<div class="t" style="left:1116.00px;top:736.17px;font-size:14.5px;color:#939393;font-weight:400;letter-spacing:-0.2px;">Sep 10, 2024</div>
<div class="t" style="left:1242.00px;top:736.17px;font-size:14.5px;color:#939393;font-weight:400;letter-spacing:-0.2px;">Sep 10, 2024</div>
<svg style="position:absolute;left:1382px;top:733.5px;" width="24" height="24" viewBox="0 0 24 24"><path d="M12 6.5c3.79 0 7.17 2.13 8.82 5.5-1.65 3.37-5.02 5.5-8.82 5.5S4.83 15.37 3.18 12C4.83 8.63 8.21 6.5 12 6.5m0-2C7 4.5 2.73 7.61 1 12c1.73 4.39 6 7.5 11 7.5s9.27-3.11 11-7.5c-1.73-4.39-6-7.5-11-7.5zm0 5c1.38 0 2.5 1.12 2.5 2.5s-1.12 2.5-2.5 2.5-2.5-1.12-2.5-2.5 1.12-2.5 2.5-2.5m0-2c-2.48 0-4.5 2.02-4.5 4.5s2.02 4.5 4.5 4.5 4.5-2.02 4.5-4.5-2.02-4.5-4.5-4.5z" fill="#6e6e6e"/></svg>
<svg style="position:absolute;left:1430px;top:734px;" width="24" height="24" viewBox="0 0 24 24"><path fill-rule="evenodd" d="M5 3H14.6L21 9.4V19a2 2 0 0 1-2 2H5a2 2 0 0 1-2-2V5a2 2 0 0 1 2-2zM5 5V19H19V10H14.5V5z" fill="#6e6e6e"/><path d="M7 7h2v2H7zM7 11h2v2H7zM7 15h2v2H7z" fill="#6e6e6e"/></svg>
<svg style="position:absolute;left:1478px;top:734px;" width="24" height="24" viewBox="0 0 24 24"><path d="M3 17.25V21h3.75L17.81 9.94l-3.75-3.75L3 17.25zM5.92 19H5v-.92l9.06-9.06.92.92L5.92 19zM20.71 5.63l-2.34-2.34c-.39-.39-1.02-.39-1.41 0l-1.83 1.83 3.75 3.75 1.83-1.83c.39-.39.39-1.02 0-1.41z" fill="#6e6e6e"/></svg>
<svg style="position:absolute;left:1526px;top:734px;" width="24" height="24" viewBox="0 0 24 24"><path d="M16 1H4c-1.1 0-2 .9-2 2v14h2V3h12V1zm3 4H8c-1.1 0-2 .9-2 2v14c0 1.1.9 2 2 2h11c1.1 0 2-.9 2-2V7c0-1.1-.9-2-2-2zm0 16H8V7h11v14z" fill="#6e6e6e"/></svg>
<svg style="position:absolute;left:1574px;top:734px;" width="24" height="24" viewBox="0 0 24 24"><path d="M16 9v10H8V9h8m-1.5-6h-5l-1 1H5v2h14V4h-3.5l-1-1zM18 7H6v12c0 1.1.9 2 2 2h8c1.1 0 2-.9 2-2V7z" fill="#cc0a5c"/></svg>
<div style="position:absolute;left:293px;top:851px;width:1333px;height:1px;background:#e0e0e0"></div>
<div style="position:absolute;left:309px;top:792px;width:170px;height:48px;border:1px solid #8f8f8f;border-radius:7px;box-sizing:border-box"></div>
<div class="t" style="left:325.00px;top:805.80px;font-size:15px;color:#333;font-weight:400;letter-spacing:-0.05px;">GA4 Exports Gr…</div>
<svg style="position:absolute;left:450px;top:812px;" width="16" height="10" viewBox="0 0 16 10"><path d="M3 2.5 H13 L8 7.8z" fill="#6b6b6b"/></svg>
<div class="t" style="left:535.00px;top:806.14px;font-size:14.3px;color:#959595;font-weight:400;letter-spacing:0.7px;word-spacing:-1px;">GA4 - Purchase Journey</div>
<svg style="position:absolute;left:769px;top:801px;" width="27" height="31" viewBox="0 0 27 31"><circle cx="3.8" cy="26.4" r="3.7" fill="#e37400"/><rect x="9.3" y="11" width="7.2" height="19" rx="3.6" fill="#e37400"/><rect x="18.7" y="0" width="7.2" height="30" rx="3.6" fill="#f9ab00"/></svg>
<div class="t" style="left:803.00px;top:796.35px;font-size:14px;color:#7a7a7a;font-weight:400;letter-spacing:1.15px;">Google</div>
<div class="t" style="left:803.00px;top:816.35px;font-size:14px;color:#7a7a7a;font-weight:400;letter-spacing:0.9px;">Analytics 4</div>
<div style="position:absolute;left:944px;top:792px;width:44px;height:44px;border-radius:50%;background:#fff"></div>
<div style="position:absolute;left:947px;top:795px;width:38px;height:38px;border-radius:50%;background:#004b3c"></div>
<div class="t" style="left:959.50px;top:804.39px;font-size:20.5px;color:#fff;font-weight:400;letter-spacing:0px;">P</div>
<div class="t" style="left:1116.00px;top:806.17px;font-size:14.5px;color:#939393;font-weight:400;letter-spacing:-0.2px;">Sep 10, 2024</div>
<div class="t" style="left:1242.00px;top:806.17px;font-size:14.5px;color:#939393;font-weight:400;letter-spacing:-0.2px;">Sep 10, 2024</div>
<svg style="position:absolute;left:1382px;top:803.5px;" width="24" height="24" viewBox="0 0 24 24"><path d="M12 6.5c3.79 0 7.17 2.13 8.82 5.5-1.65 3.37-5.02 5.5-8.82 5.5S4.83 15.37 3.18 12C4.83 8.63 8.21 6.5 12 6.5m0-2C7 4.5 2.73 7.61 1 12c1.73 4.39 6 7.5 11 7.5s9.27-3.11 11-7.5c-1.73-4.39-6-7.5-11-7.5zm0 5c1.38 0 2.5 1.12 2.5 2.5s-1.12 2.5-2.5 2.5-2.5-1.12-2.5-2.5 1.12-2.5 2.5-2.5m0-2c-2.48 0-4.5 2.02-4.5 4.5s2.02 4.5 4.5 4.5 4.5-2.02 4.5-4.5-2.02-4.5-4.5-4.5z" fill="#6e6e6e"/></svg>
<svg style="position:absolute;left:1430px;top:804px;" width="24" height="24" viewBox="0 0 24 24"><path fill-rule="evenodd" d="M5 3H14.6L21 9.4V19a2 2 0 0 1-2 2H5a2 2 0 0 1-2-2V5a2 2 0 0 1 2-2zM5 5V19H19V10H14.5V5z" fill="#6e6e6e"/><path d="M7 7h2v2H7zM7 11h2v2H7zM7 15h2v2H7z" fill="#6e6e6e"/></svg>
<svg style="position:absolute;left:1478px;top:804px;" width="24" height="24" viewBox="0 0 24 24"><path d="M3 17.25V21h3.75L17.81 9.94l-3.75-3.75L3 17.25zM5.92 19H5v-.92l9.06-9.06.92.92L5.92 19zM20.71 5.63l-2.34-2.34c-.39-.39-1.02-.39-1.41 0l-1.83 1.83 3.75 3.75 1.83-1.83c.39-.39.39-1.02 0-1.41z" fill="#6e6e6e"/></svg>
<svg style="position:absolute;left:1526px;top:804px;" width="24" height="24" viewBox="0 0 24 24"><path d="M16 1H4c-1.1 0-2 .9-2 2v14h2V3h12V1zm3 4H8c-1.1 0-2 .9-2 2v14c0 1.1.9 2 2 2h11c1.1 0 2-.9 2-2V7c0-1.1-.9-2-2-2zm0 16H8V7h11v14z" fill="#6e6e6e"/></svg>
<svg style="position:absolute;left:1574px;top:804px;" width="24" height="24" viewBox="0 0 24 24"><path d="M16 9v10H8V9h8m-1.5-6h-5l-1 1H5v2h14V4h-3.5l-1-1zM18 7H6v12c0 1.1.9 2 2 2h8c1.1 0 2-.9 2-2V7z" fill="#cc0a5c"/></svg>
<div style="position:absolute;left:293px;top:921px;width:1333px;height:1px;background:#e0e0e0"></div>
<div style="position:absolute;left:309px;top:862px;width:170px;height:48px;border:1px solid #8f8f8f;border-radius:7px;box-sizing:border-box"></div>
<div class="t" style="left:325.00px;top:875.80px;font-size:15px;color:#333;font-weight:400;letter-spacing:-0.05px;">GA4 Exports Gr…</div>
<svg style="position:absolute;left:450px;top:882px;" width="16" height="10" viewBox="0 0 16 10"><path d="M3 2.5 H13 L8 7.8z" fill="#6b6b6b"/></svg>
<div class="t" style="left:535.00px;top:876.14px;font-size:14.3px;color:#959595;font-weight:400;letter-spacing:0.7px;word-spacing:-1px;">GA4 - Tech</div>
<svg style="position:absolute;left:769px;top:871px;" width="27" height="31" viewBox="0 0 27 31"><circle cx="3.8" cy="26.4" r="3.7" fill="#e37400"/><rect x="9.3" y="11" width="7.2" height="19" rx="3.6" fill="#e37400"/><rect x="18.7" y="0" width="7.2" height="30" rx="3.6" fill="#f9ab00"/></svg>
<div class="t" style="left:803.00px;top:866.35px;font-size:14px;color:#7a7a7a;font-weight:400;letter-spacing:1.15px;">Google</div>
<div class="t" style="left:803.00px;top:886.35px;font-size:14px;color:#7a7a7a;font-weight:400;letter-spacing:0.9px;">Analytics 4</div>
<div style="position:absolute;left:944px;top:862px;width:44px;height:44px;border-radius:50%;background:#fff"></div>
<div style="position:absolute;left:947px;top:865px;width:38px;height:38px;border-radius:50%;background:#004b3c"></div>
<div class="t" style="left:959.50px;top:874.39px;font-size:20.5px;color:#fff;font-weight:400;letter-spacing:0px;">P</div>
<div class="t" style="left:1116.00px;top:876.17px;font-size:14.5px;color:#939393;font-weight:400;letter-spacing:-0.2px;">Sep 10, 2024</div>
<div class="t" style="left:1242.00px;top:876.17px;font-size:14.5px;color:#939393;font-weight:400;letter-spacing:-0.2px;">Sep 10, 2024</div>
<svg style="position:absolute;left:1382px;top:873.5px;" width="24" height="24" viewBox="0 0 24 24"><path d="M12 6.5c3.79 0 7.17 2.13 8.82 5.5-1.65 3.37-5.02 5.5-8.82 5.5S4.83 15.37 3.18 12C4.83 8.63 8.21 6.5 12 6.5m0-2C7 4.5 2.73 7.61 1 12c1.73 4.39 6 7.5 11 7.5s9.27-3.11 11-7.5c-1.73-4.39-6-7.5-11-7.5zm0 5c1.38 0 2.5 1.12 2.5 2.5s-1.12 2.5-2.5 2.5-2.5-1.12-2.5-2.5 1.12-2.5 2.5-2.5m0-2c-2.48 0-4.5 2.02-4.5 4.5s2.02 4.5 4.5 4.5 4.5-2.02 4.5-4.5-2.02-4.5-4.5-4.5z" fill="#6e6e6e"/></svg>
<svg style="position:absolute;left:1430px;top:874px;" width="24" height="24" viewBox="0 0 24 24"><path fill-rule="evenodd" d="M5 3H14.6L21 9.4V19a2 2 0 0 1-2 2H5a2 2 0 0 1-2-2V5a2 2 0 0 1 2-2zM5 5V19H19V10H14.5V5z" fill="#6e6e6e"/><path d="M7 7h2v2H7zM7 11h2v2H7zM7 15h2v2H7z" fill="#6e6e6e"/></svg>
<svg style="position:absolute;left:1478px;top:874px;" width="24" height="24" viewBox="0 0 24 24"><path d="M3 17.25V21h3.75L17.81 9.94l-3.75-3.75L3 17.25zM5.92 19H5v-.92l9.06-9.06.92.92L5.92 19zM20.71 5.63l-2.34-2.34c-.39-.39-1.02-.39-1.41 0l-1.83 1.83 3.75 3.75 1.83-1.83c.39-.39.39-1.02 0-1.41z" fill="#6e6e6e"/></svg>
<svg style="position:absolute;left:1526px;top:874px;" width="24" height="24" viewBox="0 0 24 24"><path d="M16 1H4c-1.1 0-2 .9-2 2v14h2V3h12V1zm3 4H8c-1.1 0-2 .9-2 2v14c0 1.1.9 2 2 2h11c1.1 0 2-.9 2-2V7c0-1.1-.9-2-2-2zm0 16H8V7h11v14z" fill="#6e6e6e"/></svg>
<svg style="position:absolute;left:1574px;top:874px;" width="24" height="24" viewBox="0 0 24 24"><path d="M16 9v10H8V9h8m-1.5-6h-5l-1 1H5v2h14V4h-3.5l-1-1zM18 7H6v12c0 1.1.9 2 2 2h8c1.1 0 2-.9 2-2V7z" fill="#cc0a5c"/></svg>
<svg style="position:absolute;left:1496px;top:266px;" width="24" height="26" viewBox="0 0 24 26"><path d="M8.2 13 V3.9 A1.9 1.9 0 0 1 12 3.9 V8.2 A1.5 1.5 0 0 1 15 8.2 V9.7 A1.5 1.5 0 0 1 18 9.7 V11.2 A1.5 1.5 0 0 1 21 11.2 V15 L18.5 23.5 H10 L5.5 14.8 A1.6 1.6 0 0 1 8.2 13.5 Z" fill="#fff" stroke="#000" stroke-width="1.1"/></svg>
<div style="position:absolute;left:1440px;top:288px;width:100px;height:44px;border-radius:9px;background:#000"></div>
<div class="t" style="left:1452.00px;top:300.87px;font-size:14.5px;color:#fff;font-weight:700;letter-spacing:-0.3px;">Edit Report</div>
<div style="position:absolute;left:1463px;top:228px;width:54px;height:52px;border:3px solid #ff0000;box-sizing:border-box"></div>
<div style="position:absolute;left:1658px;top:65px;width:11px;height:856px;background:#f1f1f1"></div>
<svg style="position:absolute;left:1658px;top:65px;" width="11" height="10" viewBox="0 0 11 10"><path d="M5.5 3.5 L8.5 7 H2.5z" fill="#505050"/></svg>
<div style="position:absolute;left:1660px;top:296px;width:7px;height:574px;background:#c1c1c1"></div>
</div>
</body></html>
